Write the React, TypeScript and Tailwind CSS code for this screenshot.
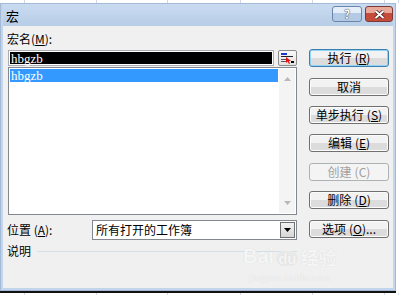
import React from "react";

const gridCols = [25, 72, 71, 73, 72, 72, 14];

function GridStrip({ h }: { h: string }) {
  return (
    <div className={`flex ${h} bg-white`}>
      {gridCols.map((w, i) => (
        <div
          key={i}
          className="h-full shrink-0 border-r border-[#d0d7e5]"
          style={{ width: w }}
        />
      ))}
    </div>
  );
}

interface BtnProps {
  label: string;
  k?: string;
  tail?: string;
  def?: boolean;
  disabled?: boolean;
  mt: string;
}

function Btn({ label, k, tail = ")", def, disabled, mt }: BtnProps) {
  const base =
    "flex h-[18px] w-[80px] items-center justify-center gap-[3px] rounded-[3px] border text-[12px] leading-none";
  const hotkey = k ? (
    <span>
      (<span className={disabled ? "" : "underline"}>{k}</span>
      {tail}
    </span>
  ) : null;
  if (disabled) {
    return (
      <div
        className={`${base} ${mt} border-[#adb2b5] bg-[#f4f4f4] text-[#a0a0a0]`}
      >
        <span>{label}</span>
        {hotkey}
      </div>
    );
  }
  return (
    <div
      className={`${base} ${mt} ${
        def
          ? "border-[#3c7fb1] shadow-[inset_0_0_0_1px_#8fd3f5]"
          : "border-[#707070] shadow-[inset_0_0_0_1px_#fcfcfc]"
      } bg-gradient-to-b from-[#f2f2f2] from-50% to-[#dcdcdc] to-50% text-black`}
    >
      <span>{label}</span>
      {hotkey}
    </div>
  );
}

export default function App() {
  return (
    <div className="relative h-[295px] w-[399px] overflow-hidden bg-white font-['Noto_Sans_CJK_SC',sans-serif]">
      <GridStrip h="h-[3px]" />
      <div className="flex">
        <div className="flex h-[288px] w-[396px] flex-col border border-[#a4bad4] bg-[#c2d5ec] px-[2px] pb-[2px]">
          {/* title bar */}
          <div className="flex h-[22px] items-start bg-gradient-to-b from-[#c9dbf0] to-[#b7cde6]">
            <span className="ml-[3px] mt-[4px] text-[13px] leading-[16px] text-black">
              宏
            </span>
            <div className="ml-auto mt-[2px] flex gap-[3px]">
              <div className="flex h-[16px] w-[30px] items-center justify-center rounded-[3px] border border-[#6a87ab] bg-gradient-to-b from-[#e4edf8] from-45% to-[#b4c9e3] to-45% text-[12px] font-bold leading-none text-white [text-shadow:0_0_1px_#334,0_0_1px_#334]">
                ?
              </div>
              <div className="flex h-[16px] w-[28px] items-center justify-center rounded-[3px] border border-[#7b3a33] bg-gradient-to-b from-[#e9a99b] from-45% to-[#c54b3b] to-45%">
                <svg width="11" height="9" viewBox="0 0 11 9">
                  <path
                    d="M1.5 1 L9.5 8 M9.5 1 L1.5 8"
                    stroke="#3a1a16"
                    strokeWidth="3.4"
                  />
                  <path
                    d="M1.5 1 L9.5 8 M9.5 1 L1.5 8"
                    stroke="#fff"
                    strokeWidth="2"
                  />
                </svg>
              </div>
            </div>
          </div>
          {/* client */}
          <div className="relative flex flex-1 bg-[#f0f0f0] pl-[5px]">
            <div className="flex w-[289px] flex-col">
              <div className="ml-[-1px] mt-[5px] h-[16px] text-[12px] leading-[16px] text-black">
                宏名(<span className="underline">M</span>):
              </div>
              <div className="mt-[3px] flex h-[16px]">
                <div className="flex w-[266px] border border-[#abadb3] bg-white p-[1px]">
                  <div className="flex flex-1 items-center bg-black pl-[1px] font-['Liberation_Serif',serif] text-[13px] leading-none text-white">
                    hbgzb
                  </div>
                </div>
                <div className="ml-auto flex w-[19px] items-center justify-center rounded-[2px] border border-[#8c8c8c] bg-gradient-to-b from-[#fafafa] to-[#e2e2e2]">
                  <svg width="15" height="12" viewBox="0 0 15 12">
                    <rect x="1" y="1" width="6" height="2" fill="#1a3cc8" />
                    <rect x="1" y="4" width="12" height="1" fill="#222" />
                    <rect x="1" y="7" width="5" height="1" fill="#555" />
                    <rect x="1" y="9" width="5" height="1" fill="#555" />
                    <rect x="11" y="9" width="3" height="2" fill="#000" />
                    <path d="M6 5 L6 11 L7.5 9.5 L9 12 L10 11.5 L8.8 9 L11 9 Z" fill="#e81010" />
                  </svg>
                </div>
              </div>
              <div className="mt-[1px] flex h-[148px] border border-[#828790] bg-white p-[1px]">
                <div className="flex-1 pr-[1px]">
                  <div className="flex h-[13px] items-center bg-[#3399ff] pl-[1px] font-['Liberation_Serif',serif] text-[13px] leading-none text-white">
                    hbgzb
                  </div>
                </div>
                <div className="flex w-[16px] flex-col items-center justify-between bg-[#f4f4f4] py-[8px]">
                  <svg width="7" height="4" viewBox="0 0 7 4">
                    <path d="M0 4 L3.5 0 L7 4 Z" fill="#b8b8b8" />
                  </svg>
                  <svg width="7" height="4" viewBox="0 0 7 4">
                    <path d="M0 0 L3.5 4 L7 0 Z" fill="#b8b8b8" />
                  </svg>
                </div>
              </div>
              <div className="mt-[5px] flex h-[20px] items-center">
                <span className="ml-[-1px] w-[85px] text-[12px] leading-none text-black">
                  位置 (<span className="underline">A</span>):
                </span>
                <div className="flex h-full flex-1 border border-[#828790] bg-white">
                  <span className="flex flex-1 items-center pl-[3px] text-[12px] leading-none text-black">
                    所有打开的工作簿
                  </span>
                  <div className="m-[1px] flex w-[15px] items-center justify-center border border-[#707070] bg-gradient-to-b from-[#f2f2f2] to-[#d6d6d6]">
                    <svg width="7" height="4" viewBox="0 0 7 4">
                      <path d="M0 0 L3.5 4 L7 0 Z" fill="#000" />
                    </svg>
                  </div>
                </div>
              </div>
              <div className="mt-[3px] flex h-[16px] items-center">
                <span className="ml-[-1px] text-[12px] leading-none text-black">
                  说明
                </span>
                <div className="ml-[6px] h-px flex-1 bg-[#d5dfe5]" />
              </div>
            </div>
            <div className="ml-[12px] flex flex-col pt-[23px]">
              <Btn label="执行" k="R" def mt="mt-0" />
              <Btn label="取消" mt="mt-[11px]" />
              <Btn label="单步执行" k="S" mt="mt-[10px]" />
              <Btn label="编辑" k="E" mt="mt-[10px]" />
              <Btn label="创建" k="C" disabled mt="mt-[11px]" />
              <Btn label="删除" k="D" mt="mt-[10px]" />
              <Btn label="选项" k="O" tail=")..." mt="mt-[11px]" />
            </div>
            {/* watermark */}
            <div className="pointer-events-none absolute left-[240px] top-[220px] flex flex-col items-center text-[#f5f5f5] [text-shadow:0_0_1px_#d2d2d2]">
              <div className="flex items-end gap-[2px] font-['Liberation_Sans',sans-serif] text-[20px] font-bold leading-none">
                <span>Bai</span>
                <span className="rounded-full bg-[#e9e9e9] px-[2px] text-[15px]">du</span>
                <span className="font-['Noto_Sans_CJK_SC',sans-serif] text-[18px]">经验</span>
              </div>
              <div className="mt-[6px] font-['Liberation_Serif',serif] text-[11px] leading-none">
                jingyan.baidu.com
              </div>
            </div>
          </div>
        </div>
        <div className="flex-1" />
      </div>
      <div className="h-[2px] w-[396px] bg-[#111]" />
      <GridStrip h="h-[2px]" />
    </div>
  );
}
